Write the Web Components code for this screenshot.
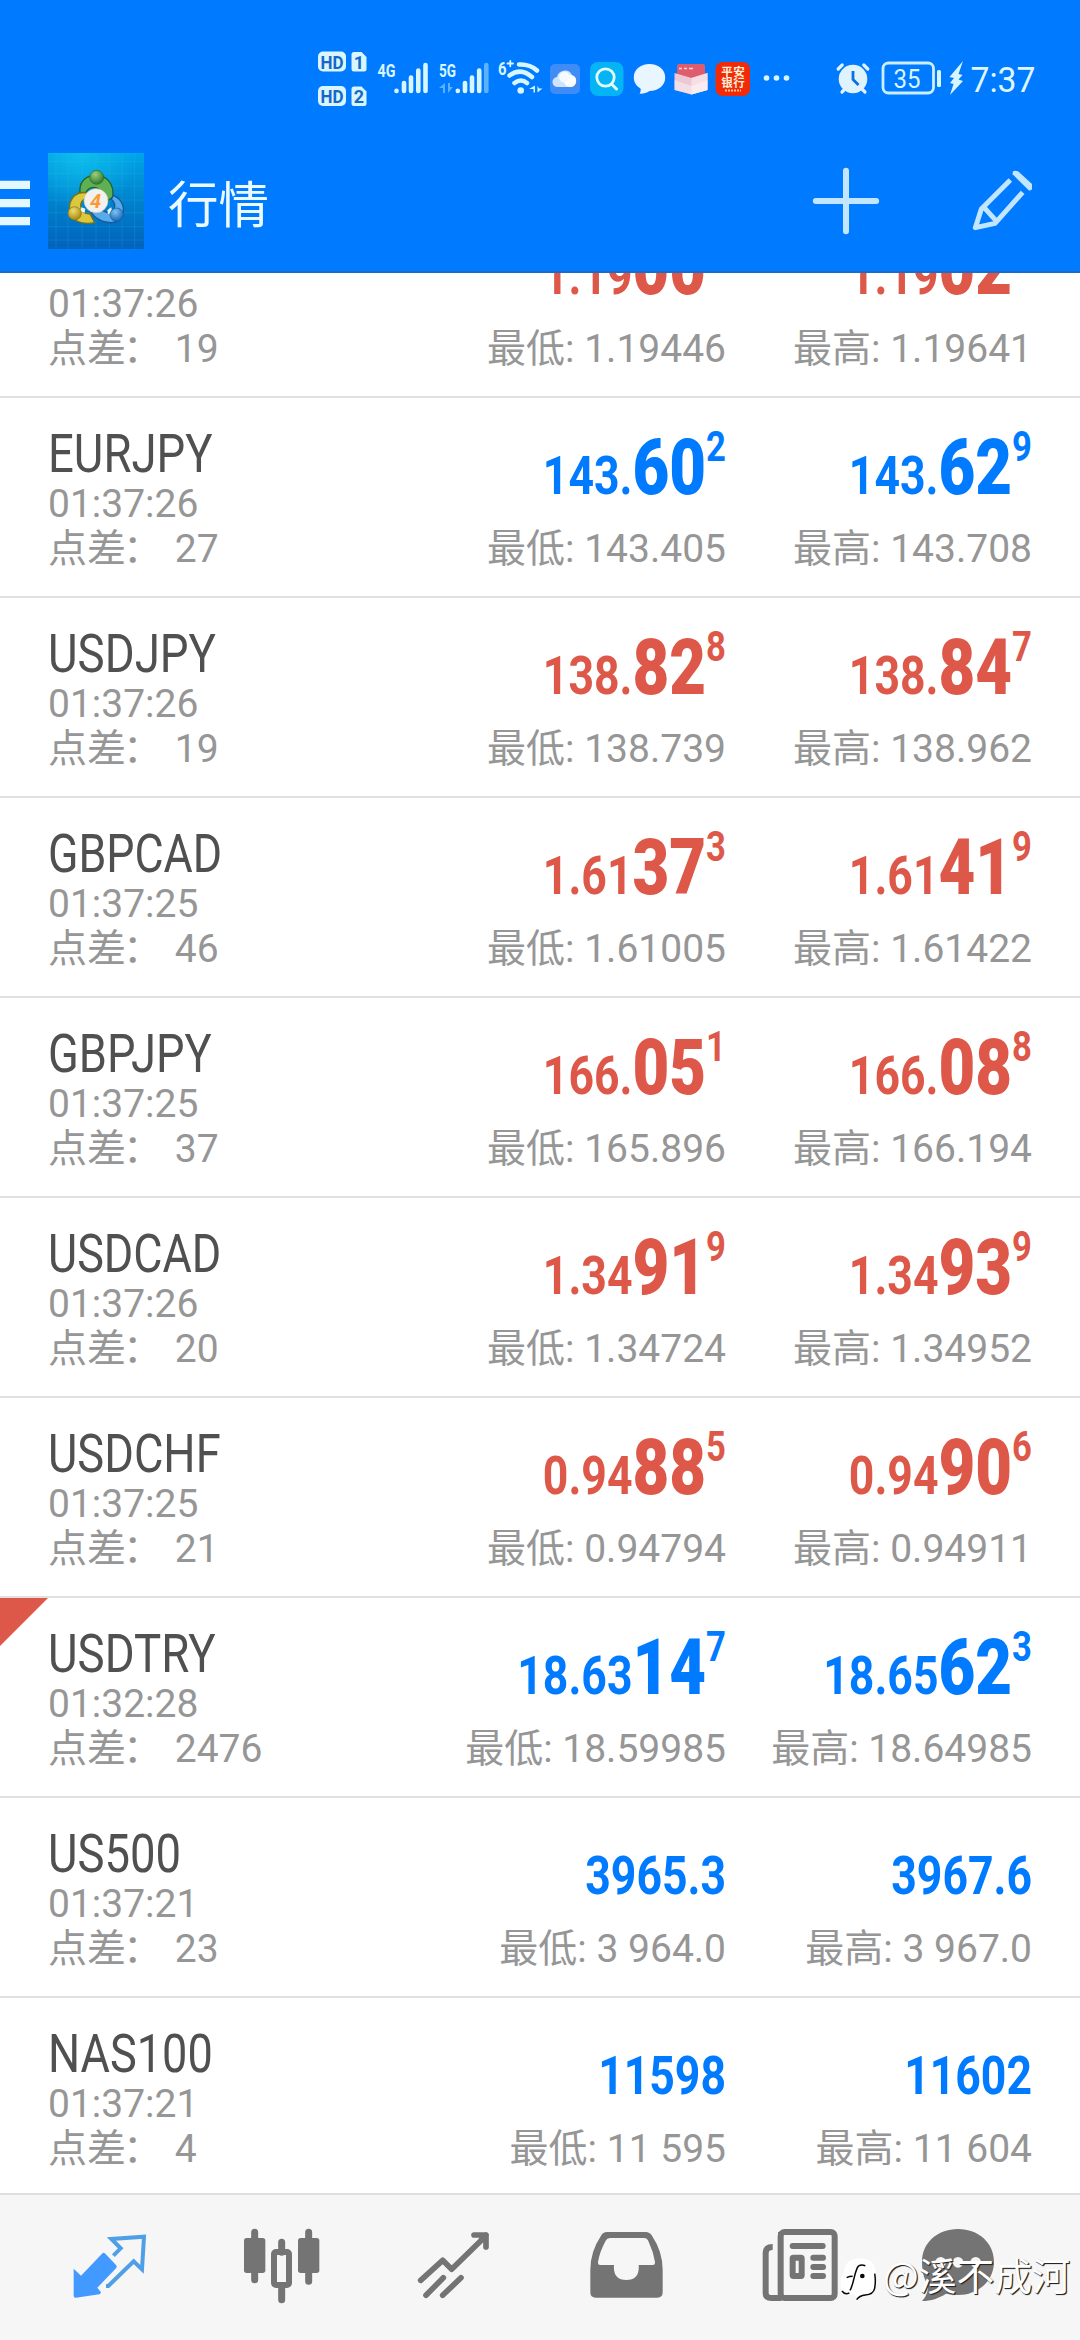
<!DOCTYPE html>
<html lang="zh-CN">
<head>
<meta charset="utf-8">
<title>行情</title>
<style>
  html, body { margin: 0; padding: 0; }
  body { width: 1080px; height: 2340px; overflow: hidden; background: #fff; font-family: Roboto, "Noto Sans CJK SC", sans-serif; }
</style>
</head>
<body>
<quotes-app></quotes-app>

<template id="t-app">
  <style>
    :host { display: flex; flex-direction: column; width: 1080px; height: 2340px; position: relative; overflow: hidden; }
    .list { flex: 1; min-height: 0; overflow: hidden; }
    .list > :first-child { margin-top: -75px; }
  </style>
  <phone-status></phone-status>
  <app-header>行情</app-header>
  <div class="list"></div>
  <tab-bar></tab-bar>
  <water-mark>@溪不成河</water-mark>
</template>

<template id="t-status">
  <style>
    :host { display: flex; height: 130px; background: #007aff; box-sizing: border-box; padding: 45px 0 0 312px; }
    svg { display: block; flex: none; height: 66px; }
  </style>
  <!-- HD badges -->
  <svg width="60" viewBox="312 45 60 66" fill="#d8f6ff">
    <rect x="318" y="51.5" width="28" height="20" rx="5"/><path d="M354 52h7.500l5 5v12q0 2.500-2.500 2.500h-10q-2.500 0-2.500-2.500v-14.500q0-2.500 2.500-2.500z"/>
    <rect x="318" y="86" width="28" height="20" rx="5"/><path d="M354 86.500h7.500l5 5v12q0 2.500-2.500 2.500h-10q-2.500 0-2.500-2.500v-14.500q0-2.500 2.500-2.500z"/>
    <g fill="#1668c8" font-family="Roboto" font-weight="700" font-size="19" text-anchor="middle">
      <text x="332" y="68.500" textLength="23" lengthAdjust="spacingAndGlyphs">HD</text><text x="359" y="68.500" font-size="18">1</text>
      <text x="332" y="103" textLength="23" lengthAdjust="spacingAndGlyphs">HD</text><text x="359" y="103" font-size="18">2</text>
    </g>
  </svg>
  <!-- 4G signal -->
  <svg width="62" viewBox="372 45 62 66" fill="none" stroke="#d8f6ff" stroke-width="4.600" stroke-linecap="round">
    <text x="377.500" y="76.500" font-family="Roboto" font-weight="700" font-size="19" fill="#d8f6ff" stroke="none" textLength="18" lengthAdjust="spacingAndGlyphs">4G</text>
    <path d="M396.500 90.800v.2M404 83v8M411 77.500v13.500M418.300 70.500v20.500M425.500 65v26"/>
  </svg>
  <!-- 5G signal -->
  <svg width="60" viewBox="434 45 60 66" fill="none" stroke="#d8f6ff" stroke-width="4.600" stroke-linecap="round">
    <text x="439" y="76.500" font-family="Roboto" font-weight="700" font-size="19" fill="#d8f6ff" stroke="none" textLength="17" lengthAdjust="spacingAndGlyphs">5G</text>
    <path d="M457.800 90.800v.2M465 83v8M472 77.500v13.500M479.200 70.500v20.500"/>
    <path d="M486.300 65v26" stroke="#5cb2ff"/>
    <path d="M445 83v10h-2v-5h-4zM448 83v10l5-6h-3v-4z" fill="#5cb2ff" stroke="none"/>
  </svg>
  <!-- Wi-Fi -->
  <svg width="52" viewBox="494 45 52 66" fill="none" stroke="#d8f6ff" stroke-width="4.500" stroke-linecap="round">
    <text x="498" y="74.500" font-family="Roboto" font-weight="700" font-size="18" fill="#d8f6ff" stroke="none" textLength="8.500" lengthAdjust="spacingAndGlyphs">6</text>
    <path d="M507.500 63.500h5.500M510.300 60.800v5.500" stroke-width="1.800"/>
    <path d="M519 64.500Q530 64 537 70.500M509.500 75.500Q521 67 532 77M514.500 83Q521 78 527 83"/>
    <circle cx="520.700" cy="90.500" r="3.300" fill="#d8f6ff" stroke="none"/>
    <path d="M535 85.500v7h-1.500v-3.500h-4.500zM537.500 85.500v7l5-4h-3.500z" fill="#d8f6ff" stroke="none"/>
  </svg>
  <!-- Weather -->
  <svg width="40" viewBox="546 45 40 66">
    <rect x="550" y="64" width="30" height="30" rx="5" fill="#3f8cf6"/>
    <path d="M558 87a5 5 0 0 1-1-10 8 8 0 0 1 15-2 6.200 6.200 0 0 1-1 12z" fill="#cfe4fc"/><circle cx="570" cy="81" r="6" fill="#fff"/><circle cx="564.500" cy="77" r="5.500" fill="#f4faff"/>
  </svg>
  <!-- Search -->
  <svg width="44" viewBox="586 45 44 66">
    <rect x="590" y="62" width="33.500" height="34" rx="8" fill="#04b4f4"/>
    <circle cx="605.500" cy="77.500" r="8.700" fill="none" stroke="#e4fbff" stroke-width="2.800"/><path d="M611.500 84l5 5" stroke="#e4fbff" stroke-width="3" stroke-linecap="round"/>
  </svg>
  <!-- Message -->
  <svg width="40" viewBox="630 45 40 66">
    <path d="M649.500 64c9 0 15.700 5.500 15.700 13.500S658.500 91 649.500 91c-3 2-6 2.800-10 2.600 1.200-1.500 1.500-3.200 1-5-4-2.500-6.700-6-6.700-11.100C633.800 69.500 640.500 64 649.500 64z" fill="#e9f5ff"/>
  </svg>
  <!-- Box -->
  <svg width="42" viewBox="670 45 42 66">
    <path d="M677 66q0-2 2-2h24q2 0 2 2v13l-14 5-14-5z" fill="#df5c6c"/><path d="M679 68.500h3m2 0h3m2 0h4" stroke="#ffd8dc" stroke-width="1.500"/>
    <path d="M674.500 73l17 5 16-5v17l-16 4.500-17-4.500z" fill="#edc8d4"/><path d="M691.500 78l16-5v17l-16 4.500z" fill="#f5dfe4"/><path d="M674.500 80l17 6v8.500l-17-4.500zM691.500 86l16-6v10l-16 4.500z" fill="#fff" opacity=".4"/>
  </svg>
  <!-- Ping An Bank -->
  <svg width="44" viewBox="712 45 44 66">
    <rect x="715.500" y="62" width="34.500" height="34" rx="7" fill="#f32a08"/>
    <g fill="#fff2d8" font-family="Noto Sans CJK SC" font-weight="700" font-size="11.500" text-anchor="middle"><text x="733" y="76" textLength="23.500">平安</text><text x="733" y="87" textLength="23.500">银行</text></g>
    <path d="M725 90.500h16" stroke="#ffc8a0" stroke-width="1.800" stroke-dasharray="2 1"/>
  </svg>
  <svg width="74" viewBox="756 45 74 66" fill="#d8f6ff"><circle cx="766.500" cy="78" r="2.800"/><circle cx="776.500" cy="78" r="2.800"/><circle cx="786.500" cy="78" r="2.800"/></svg>
  <!-- Alarm -->
  <svg width="46" viewBox="830 45 46 66">
    <circle cx="853" cy="79" r="14.300" fill="#dff3ff"/>
    <path d="M838.200 69l4-4M867.800 69l-4-4M842 92l3-3M865 92l-3-3" stroke="#dff3ff" stroke-width="3.200" stroke-linecap="round"/>
    <path d="M853 71v8.500l5.500 5.500" stroke="#0a6fe0" stroke-width="2.800" fill="none"/>
  </svg>
  <!-- Battery -->
  <svg width="94" viewBox="876 45 94 66">
    <rect x="883" y="63" width="50.500" height="30" rx="5.500" fill="none" stroke="#cceeff" stroke-width="2.800"/>
    <rect x="937" y="70" width="4" height="17" rx="1.500" fill="#d8f6ff"/>
    <text x="907" y="88" font-family="Roboto" font-size="26" fill="#d8f6ff" text-anchor="middle" textLength="27" lengthAdjust="spacingAndGlyphs">35</text>
    <path d="M963 61l-13.500 16 4.500 1-4 5 3.500 1-3.500 11 13-14-4.500-1.500 4-4.500-4-1z" fill="#d8f6ff"/>
  </svg>
  <svg width="80" viewBox="970 45 80 66"><text x="970.500" y="92" font-family="Roboto" font-size="35.500" fill="#dff6ff" textLength="65" lengthAdjust="spacingAndGlyphs">7:37</text></svg>
</template>

<template id="t-header">
  <style>
    :host { display: flex; align-items: flex-start; height: 143px; box-sizing: border-box; padding-top: 23px; background: #007aff; border-bottom: 2px solid #1a6cc4; }
    svg { display: block; flex: none; }
    .title { flex: 1; margin-left: 24px; font-size: 50.500px; line-height: 96px; color: #ebfaff; font-family: "Noto Sans CJK SC", sans-serif; }
  </style>
  <svg width="48" height="96" viewBox="0 153 48 96" fill="#e4f9ff"><path d="M0 180.700h30v8.300H0zM0 199h30v8.300H0zM0 217h30v8.300H0z"/></svg>
  <svg width="96" height="96" viewBox="144 69 288 288">
    <defs>
      <linearGradient id="bg" x1="0" y1="0" x2="0" y2="1"><stop offset="0" stop-color="#00a4e8"/><stop offset=".5" stop-color="#0082cc"/><stop offset="1" stop-color="#0062bc"/></linearGradient>
      <radialGradient id="hl" cx=".35" cy="0" r=".6"><stop offset="0" stop-color="#10c4ec" stop-opacity=".8"/><stop offset="1" stop-color="#10c4ec" stop-opacity="0"/></radialGradient>
      <radialGradient id="gg" cx=".4" cy=".3" r=".7"><stop offset="0" stop-color="#9ccf80"/><stop offset="1" stop-color="#2f7a2a"/></radialGradient>
      <radialGradient id="gy" cx=".4" cy=".3" r=".7"><stop offset="0" stop-color="#f0dc70"/><stop offset="1" stop-color="#a58a10"/></radialGradient>
      <radialGradient id="gb" cx=".4" cy=".3" r=".7"><stop offset="0" stop-color="#7cc4f4"/><stop offset="1" stop-color="#1766b8"/></radialGradient>
    </defs>
    <path fill="url(#bg)" d="M144 69h288v288H144z"/><path fill="url(#hl)" d="M144 69h288v288H144z"/>
    <path d="M168 69v288M204 69v288M246 69v288M288 69v288M328 69v288M366 69v288M404 69v288M144 94h288M144 130h288M144 168h288M144 210h288M144 248h288M144 290h288M144 330h288" stroke="#48c0f0" stroke-opacity=".25" stroke-width="2"/>
    <path d="M240 190c-4-34 16-54 48-54s56 26 50 66l-26 18c-2-26-14-48-30-48-12 0-22 8-26 20z" fill="#5eb052" stroke="#1d6428" stroke-width="4"/>
    <path d="M266 190c-34-10-58 12-58 48 0 32 34 48 76 40l-14-26c-16 0-28-8-28-26 0-12 8-18 18-22z" fill="#dcc83c" stroke="#75701a" stroke-width="4"/>
    <path d="M340 196c28 12 38 42 24 66-16 26-68 18-90-14l28-12c14 14 34 16 40 2 4-10 2-22-8-30z" fill="#58aae8" stroke="#155a9c" stroke-width="4"/>
    <path d="M244 232l12 4-2 12-12-4zM322 240l12-8 2 16-12 4z" fill="#e8f8ff"/>
    <circle cx="290" cy="142" r="21" fill="url(#gg)" stroke="#286622" stroke-width="2"/><circle cx="224" cy="250" r="20" fill="url(#gy)" stroke="#80701a" stroke-width="2"/><circle cx="350" cy="254" r="20" fill="url(#gb)" stroke="#18589c" stroke-width="2"/>
    <circle cx="288" cy="212" r="36" fill="#f3f1ee" stroke="#c8c8c0" stroke-width="2"/>
    <text x="287" y="234" font-family="Roboto" font-style="italic" font-weight="700" font-size="60" fill="#f89a38" text-anchor="middle">4</text>
  </svg>
  <div class="title"><slot></slot></div>
  <svg width="300" height="96" viewBox="0 39 900 288" fill="none" stroke="#c2e6ff">
    <path d="M198 92.500v181M107.500 183h181" stroke-width="18" stroke-linecap="round"/>
    <path d="M691 120L604 207L586 263L645 250L728 157M612 202L650 244" stroke-width="15" stroke-linejoin="round"/>
    <path d="M698 95q6-6 18 0l40 37v16q-5 5-10 3l-48-48z" fill="#c2e6ff" stroke="none"/>
  </svg>
</template>

<template id="t-row">
  <style>
    :host { display: flex; height: 200px; box-sizing: border-box; border-bottom: 2px solid #e0e0e0; padding: 0 48px; position: relative; color: #969696; font-size: 39px; line-height: 45px; white-space: nowrap; }
    :host([alert])::before { content: ""; position: absolute; left: 0; top: 0; width: 48px; height: 48px; background: #de5849; clip-path: polygon(0 0, 100% 0, 0 100%); }
    .info { flex: 1; padding-top: 28px; }
    .name { height: 56px; font-size: 54px; line-height: 55px; color: #505050; transform-origin: 0 0; }
    .colon { margin: 0 3px 0 -3px; }
  </style>
  <div class="info"><div class="name"></div><div class="time"></div><div>点差<span class="colon">：</span> <span class="spread"></span></div></div>
  <quote-price class="bid"></quote-price><quote-price class="ask"></quote-price>
</template>

<template id="t-price">
  <style>
    :host { display: block; width: 306px; flex: none; text-align: right; padding-top: 46px; box-sizing: border-box; }
    .p { height: 64px; margin-bottom: 19px; line-height: 64px; font-size: 54px; font-weight: 700; color: var(--tone); transform: scaleX(.825); transform-origin: 100% 0; }
    b, i { line-height: 0; font-style: normal; }
    b { font-size: 77px; }
    i { font-size: 42px; vertical-align: 33px; }
    .r { display: flex; justify-content: flex-end; }
  </style>
  <div class="p"><span></span><b></b><i></i></div><div class="r"></div>
</template>

<template id="t-tabs">
  <style>
    :host { display: flex; height: 147px; box-sizing: border-box; border-top: 2px solid #dedede; background: #f6f6f6; }
    svg { display: block; flex: none; height: 145px; width: 180px; }
  </style>
  <svg viewBox="0 105 540 435">
    <path d="M306 281q5-5 10 0l32 34q4 5 0 10l-56 58 10 12q2 6-4 8l-70 10q-7 1-7-6v-81l22 21z" fill="#4299ff"/>
    <path d="M340 287l22-22-28-28 98-7-6 98-25-24-76 74h-7" fill="none" stroke="#4f9fe6" stroke-width="12"/>
  </svg>
  <svg viewBox="540 105 540 435" fill="#747474">
    <path d="M764 217v142M926 217v147M845 247v30M845 380v39" stroke="#747474" stroke-width="21" stroke-linecap="round"/>
    <rect x="732" y="234" width="64" height="105" rx="8"/><rect x="894" y="234" width="64" height="105" rx="8"/>
    <rect x="822" y="276" width="45" height="99" rx="6" fill="none" stroke="#747474" stroke-width="18"/>
  </svg>
  <svg viewBox="0 105 540 435" fill="none" stroke="#747474" stroke-width="17" stroke-linecap="round" stroke-linejoin="round">
    <path d="M182 361l66-60 27 27 99-97M342 225h36v36M378 225l-14 14M198 406l52-53M248 406l55-53"/>
  </svg>
  <svg viewBox="540 105 540 435">
    <path fill="#747474" fill-rule="evenodd" d="M741 216h116q12 0 19 11 32 48 32 102v68q0 16-16 16H707q-16 0-16-16v-68q0-54 32-102 6-11 18-11zM750 234q-9 0-13 8-18 33-23 64-1 10 8 9h40q-4 45 37 45t37-45h41q9 1 8-9-5-31-20-63-4-9-13-9z"/>
  </svg>
  <svg viewBox="0 105 540 435" fill="none" stroke="#747474">
    <rect x="182" y="216" width="162" height="198" rx="12" stroke-width="18"/>
    <path d="M158 261q-21 0-21 18v120q0 15 18 15h30" stroke-width="18"/>
    <path d="M218 258h90M280 293h29M280 321h29M280 348h29" stroke-width="18" stroke-linecap="round"/>
    <rect x="218" y="293" width="27" height="55" rx="2" stroke-width="18"/><path d="M180 216v198" stroke-width="12"/>
  </svg>
  <svg viewBox="540 105 540 435">
    <path d="M714 207c62 0 108 42 108 98s-46 100-108 100c-14 0-24-2-36-4-22 14-44 22-72 22 12-12 18-26 18-48-12-16-18-42-18-70 0-56 46-98 108-98z" fill="#747474"/>
    <g fill="#f6f6f6"><circle cx="662" cy="307" r="16"/><circle cx="714" cy="307" r="16"/><circle cx="767" cy="307" r="16"/></g>
  </svg>
</template>

<template id="t-mark">
  <style>
    :host { position: absolute; right: 10px; bottom: 38px; display: flex; align-items: center; height: 56px; color: #fff; font: 37.800px/56px "Noto Sans CJK SC", sans-serif; text-shadow: 1px 1px 1px #222, 1px 1px 0 #555; white-space: nowrap; }
    svg { display: block; margin: 10px 1px 0 0; }
  </style>
  <svg width="42" height="48" viewBox="360 294 126 144">
    <path d="M364 396q-8-28 8-48 2-44 48-44 46 0 48 48v30q-2 30-28 34l-28 10-10-14q-24 6-38-16z" fill="#fff"/>
    <path d="M464 350q4 20 0 44-4 18-28 20-18 2-26 14M436 326q-18-6-24 6-6 14-10 32-6 26-12 36M380 362q8-4 18-4M366 402q8 12 22 6" fill="none" stroke="#080808" stroke-width="4.500"/><circle cx="427" cy="357" r="7" fill="#080808"/>
  </svg>
  <slot></slot>
</template>

<script>
  class Base extends HTMLElement {
    constructor(id) {
      super();
      this.attachShadow({ mode: "open" }).append(document.importNode(document.getElementById(id).content, true));
    }
    $(selector) { return this.shadowRoot.querySelector(selector); }
  }
  const RED = "#dd5849", BLUE = "#007aff";
  // name, horizontal condensing, time, spread, tone, bid [small, big, sup], ask, low, high
  const QUOTES = [
    ["", 1, "01:37:26", "19", RED, ["1.19", "00", ""], ["1.19", "02", ""], "1.19446", "1.19641"],
    ["EURJPY", .843, "01:37:26", "27", BLUE, ["143.", "60", "2"], ["143.", "62", "9"], "143.405", "143.708"],
    ["USDJPY", .845, "01:37:26", "19", RED, ["138.", "82", "8"], ["138.", "84", "7"], "138.739", "138.962"],
    ["GBPCAD", .828, "01:37:25", "46", RED, ["1.61", "37", "3"], ["1.61", "41", "9"], "1.61005", "1.61422"],
    ["GBPJPY", .837, "01:37:25", "37", RED, ["166.", "05", "1"], ["166.", "08", "8"], "165.896", "166.194"],
    ["USDCAD", .832, "01:37:26", "20", RED, ["1.34", "91", "9"], ["1.34", "93", "9"], "1.34724", "1.34952"],
    ["USDCHF", .838, "01:37:25", "21", RED, ["0.94", "88", "5"], ["0.94", "90", "6"], "0.94794", "0.94911"],
    ["USDTRY", .845, "01:32:28", "2476", BLUE, ["18.63", "14", "7"], ["18.65", "62", "3"], "18.59985", "18.64985", true],
    ["US500", .842, "01:37:21", "23", BLUE, ["3965.3", "", ""], ["3967.6", "", ""], "3 964.0", "3 967.0"],
    ["NAS100", .835, "01:37:21", "4", BLUE, ["11598", "", ""], ["11602", "", ""], "11 595", "11 604"]
  ];
  customElements.define("quote-price", class extends Base {
    constructor() { super("t-price"); }
    set data([parts, tone, range]) {
      this.style.setProperty("--tone", tone);
      this.$("span").textContent = parts[0];
      this.$("b").textContent = parts[1];
      this.$("i").textContent = parts[2];
      if (parts[1] && !parts[2]) this.$(".p").style.paddingRight = "24px";
      this.$(".r").textContent = range;
    }
  });
  customElements.define("quote-row", class extends Base {
    constructor() { super("t-row"); }
    set data([name, squeeze, time, spread, tone, bid, ask, low, high, alert]) {
      this.toggleAttribute("alert", !!alert);
      this.$(".name").textContent = name;
      this.$(".name").style.transform = `scaleX(${squeeze})`;
      this.$(".time").textContent = time;
      this.$(".spread").textContent = spread;
      this.$(".bid").data = [bid, tone, "最低: " + low];
      this.$(".ask").data = [ask, tone, "最高: " + high];
    }
  });
  customElements.define("phone-status", class extends Base { constructor() { super("t-status"); } });
  customElements.define("app-header", class extends Base { constructor() { super("t-header"); } });
  customElements.define("tab-bar", class extends Base { constructor() { super("t-tabs"); } });
  customElements.define("water-mark", class extends Base { constructor() { super("t-mark"); } });
  customElements.define("quotes-app", class extends Base {
    constructor() {
      super("t-app");
      const list = this.$(".list");
      for (const quote of QUOTES) {
        const row = document.createElement("quote-row");
        list.append(row);
        row.data = quote;
      }
    }
  });
</script>
</body>
</html>
